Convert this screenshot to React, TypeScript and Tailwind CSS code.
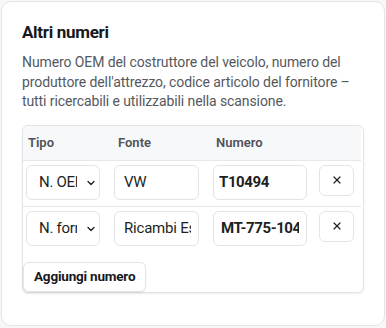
import { ChevronDown, X } from 'lucide-react';

interface NumberRow {
  tipo: string;
  fonte: string;
  numero: string;
  numeroPad: string;
}

const ROWS: NumberRow[] = [
  { tipo: 'N. OEM', fonte: 'VW', numero: 'T10494', numeroPad: 'pl-[5px]' },
  { tipo: 'N. fornitore', fonte: 'Ricambi Est', numero: 'MT-775-10494', numeroPad: 'pl-[7px]' },
];

const FONT = { fontFamily: 'Roboto, "Liberation Sans", sans-serif' };

function TipoSelect({ value }: { value: string }) {
  return (
    <div className="relative flex h-[35px] w-[74px] shrink-0 items-center rounded-md border border-[#e2e4e8] bg-white pl-[12px]">
      <span className="block w-[38px] overflow-hidden whitespace-nowrap text-[15px] tracking-[-0.3px] text-[#1d1f23]">
        {value}
      </span>
      <ChevronDown className="absolute right-[2px] top-[11px] h-[12px] w-[12px] text-[#1d1f23]" strokeWidth={2.6} />
    </div>
  );
}

export default function App() {
  return (
    <div className="h-[328px] w-[386px] bg-[#f7f7f8] pl-[1px] pt-[1px]" style={FONT}>
      <div className="h-[325px] w-[384px] rounded-[10px] border border-[#e3e4e7] bg-white px-5 pt-[18px]">
        <h2 className="text-[17px] font-bold leading-6 tracking-[-0.3px] text-[#16181b]">Altri numeri</h2>
        <p className="mt-[9px] text-[14px] leading-[19.5px] tracking-[-0.1px] text-[#55585e]">
          Numero OEM del costruttore del veicolo, numero del produttore dell'attrezzo, codice articolo del fornitore –
          tutti ricercabili e utilizzabili nella scansione.
        </p>

        <div className="mt-[13px] h-[168px] w-full rounded-md border border-[#e3e4e7] bg-white shadow-[0_1px_2px_rgba(0,0,0,0.08)]">
          <div className="w-[338px]">
            <div className="flex h-[35px] items-center rounded-tl-md border-b border-[#e6e7ea] bg-[#f7f8f9] pl-[3px] text-[13px] font-semibold text-[#4f5359]">
              <div className="w-[88px] pl-[2px]">Tipo</div>
              <div className="w-[99px] pl-[4px]">Fonte</div>
              <div className="w-[106px] pl-[3px]">Numero</div>
            </div>
            {ROWS.map((row, i) => (
              <div
                key={row.numero}
                className={`flex items-start pb-[6px] pl-[3px] pt-[4px] ${i === 0 ? 'border-b border-[#e6e7ea]' : ''}`}
              >
                <TipoSelect value={row.tipo} />
                <div className="ml-[14px] flex h-[35px] w-[85px] shrink-0 items-center overflow-hidden rounded-md border border-[#e2e4e8] pl-[9px] pr-[7px]">
                  <span className="block w-full overflow-hidden whitespace-nowrap text-[15px] tracking-[-0.2px] text-[#1d1f23]">
                    {row.fonte}
                  </span>
                </div>
                <div
                  className={`ml-[14px] flex h-[35px] w-[94px] shrink-0 items-center overflow-hidden rounded-md border border-[#e2e4e8] pr-[7px] ${row.numeroPad}`}
                >
                  <span className="block w-full overflow-hidden whitespace-nowrap text-[15px] font-bold tracking-[-0.4px] text-[#1d1f23]">
                    {row.numero}
                  </span>
                </div>
                <button className="ml-[12px] flex h-[31px] w-[35px] shrink-0 items-center justify-center rounded-md border border-[#e2e4e8] bg-white text-[#1d1f23]">
                  <X className="h-[12px] w-[12px]" strokeWidth={2.4} />
                </button>
              </div>
            ))}
          </div>
          <button className="mt-[10px] h-[30px] rounded-md border border-[#e2e4e8] bg-white px-[10px] text-[13.5px] font-bold tracking-[-0.2px] text-[#16181b] shadow-[0_1px_2px_rgba(0,0,0,0.08)]">
            Aggiungi numero
          </button>
        </div>
      </div>
    </div>
  );
}
